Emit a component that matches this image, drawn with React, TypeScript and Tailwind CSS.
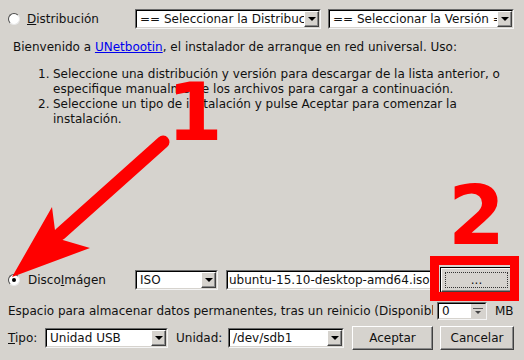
import React from "react";

function Arrow() {
  return (
    <div className="w-[15px] h-[16px] shrink-0 bg-[#d6d3ce] border border-t-white border-l-white border-b-[#404040] border-r-[#404040] shadow-[inset_-1px_-1px_0_#8a8a8a] flex items-center justify-center">
      <div className="w-0 h-0 border-l-[4px] border-r-[4px] border-t-[4px] border-l-transparent border-r-transparent border-t-black" />
    </div>
  );
}

function Sunken({ className, children }: { className: string; children: React.ReactNode }) {
  return (
    <div className={className}>
      <div className="flex-1 min-w-0 flex bg-white border border-t-black border-l-black border-b-[#d6d3ce] border-r-[#d6d3ce]">
        {children}
      </div>
    </div>
  );
}

function Combo({ className, text }: { className: string; text: string }) {
  return (
    <Sunken className={className}>
      <div className="flex-1 min-w-0 overflow-hidden whitespace-nowrap pl-[3px] leading-[16px]">{text}</div>
      <Arrow />
    </Sunken>
  );
}

function Radio({ on }: { on?: boolean }) {
  return (
    <div className="w-[12px] h-[12px] shrink-0 rounded-full bg-white border border-t-[#4a4a4a] border-l-[#4a4a4a] border-b-[#e8e8e8] border-r-[#e8e8e8] flex items-center justify-center">
      {on ? <div className="w-[4px] h-[4px] rounded-full bg-black" /> : null}
    </div>
  );
}

function Button({ className, children }: { className: string; children: React.ReactNode }) {
  return (
    <div className={className}>
      <div className="flex-1 flex items-center justify-center bg-[#d6d3ce] border border-t-white border-l-white border-b-[#404040] border-r-[#404040] shadow-[inset_-1px_-1px_0_#8a8a8a]">
        {children}
      </div>
    </div>
  );
}

export default function App() {
  return (
    <div className="relative w-[524px] h-[360px] overflow-hidden bg-[#d6d3ce] text-[12px] text-[#111] font-['DejaVu_Sans',sans-serif] flex flex-col">
      {/* Row 1 */}
      <div className="mt-[9px] h-[20px] flex items-center pl-[8px]">
        <div className="w-[127px] flex items-center">
          <Radio />
          <span className="ml-[7px]">
            <u>D</u>istribución
          </span>
        </div>
        <Combo className="flex w-[186px] h-[20px] shrink-0 border border-t-[#6b6b6b] border-l-[#6b6b6b] border-b-[#f4f4f4] border-r-[#f4f4f4]" text="== Seleccionar la Distribución ==" />
        <Combo className="ml-[7px] flex w-[186px] h-[20px] shrink-0 border border-t-[#6b6b6b] border-l-[#6b6b6b] border-b-[#f4f4f4] border-r-[#f4f4f4]" text="== Seleccionar la Versión ==" />
      </div>

      {/* Welcome */}
      <div className="mt-[11px] pl-[13px] leading-[15px] whitespace-nowrap">
        Bienvenido a <span className="text-[#0000ee] underline">UNetbootin</span>, el instalador de arranque en red universal. Uso:
      </div>

      <div className="mt-[12px] pl-[38px] leading-[15px] whitespace-nowrap">
        <div className="flex">
          <span className="w-[15px] shrink-0">1.</span>
          <span>
            Seleccione una distribución y versión para descargar de la lista anterior, o
            <br />
            especifique manualmente los archivos para cargar a continuación.
          </span>
        </div>
        <div className="flex">
          <span className="w-[15px] shrink-0">2.</span>
          <span>
            Seleccione un tipo de instalación y pulse Aceptar para comenzar la
            <br />
            instalación.
          </span>
        </div>
      </div>

      {/* Bottom block */}
      <div className="mt-auto mb-[10px]">
        <div className="h-[26px] flex items-center pl-[8px]">
          <div className="w-[127px] flex items-center">
            <Radio on />
            <span className="ml-[8px]">
              Disco<u>I</u>mágen
            </span>
          </div>
          <Combo className="flex w-[83px] h-[20px] shrink-0 border border-t-[#6b6b6b] border-l-[#6b6b6b] border-b-[#f4f4f4] border-r-[#f4f4f4]" text="ISO" />
          <Sunken className="ml-[8px] flex w-[206px] h-[20px] shrink-0 border border-t-[#6b6b6b] border-l-[#6b6b6b] border-b-[#f4f4f4] border-r-[#f4f4f4]">
            <div className="flex-1 min-w-0 overflow-hidden whitespace-nowrap pl-[1px] leading-[16px]">ubuntu-15.10-desktop-amd64.iso</div>
          </Sunken>
          <Button className="ml-[8px] flex w-[73px] h-[26px] shrink-0 border border-black">
            <div className="w-[63px] h-[16px] border border-dotted border-[#333] flex items-center justify-center leading-[12px]">...</div>
          </Button>
        </div>

        <div className="mt-[9px] h-[18px] flex items-center pl-[8px]">
          <div className="w-[425px] overflow-hidden whitespace-nowrap">
            Espacio para almacenar datos permanentes, tras un reinicio (Disponible: 0 MB)
          </div>
          <Sunken className="ml-[4px] flex w-[50px] h-[18px] shrink-0 border border-t-[#6b6b6b] border-l-[#6b6b6b] border-b-[#f4f4f4] border-r-[#f4f4f4]">
            <div className="flex-1 pl-[3px] leading-[14px]">0</div>
            <div className="w-[14px] shrink-0 flex flex-col items-center justify-center gap-[2px] bg-[#d6d3ce]">
              <div className="w-[10px] h-[1px] bg-[#555]" />
              <div className="w-0 h-0 border-l-[3px] border-r-[3px] border-t-[3px] border-l-transparent border-r-transparent border-t-[#444]" />
            </div>
          </Sunken>
          <span className="ml-[8px]">MB</span>
        </div>

        <div className="mt-[6px] h-[24px] flex items-center pl-[8px]">
          <span className="w-[37px] shrink-0">
            <u>T</u>ipo:
          </span>
          <Combo className="flex w-[123px] h-[20px] shrink-0 border border-t-[#6b6b6b] border-l-[#6b6b6b] border-b-[#f4f4f4] border-r-[#f4f4f4]" text="Unidad USB" />
          <span className="ml-[8px] w-[52px] shrink-0">Unidad:</span>
          <Combo className="flex w-[116px] h-[20px] shrink-0 border border-t-[#6b6b6b] border-l-[#6b6b6b] border-b-[#f4f4f4] border-r-[#f4f4f4]" text="/dev/sdb1" />
          <Button className="ml-[8px] flex w-[81px] h-[24px] shrink-0">Aceptar</Button>
          <Button className="ml-[7px] flex w-[74px] h-[24px] shrink-0">Cancelar</Button>
        </div>
      </div>

      {/* Annotations */}
      <svg className="absolute left-0 top-0 pointer-events-none" width="524" height="360" viewBox="0 0 524 360">
        <line x1="163" y1="142" x2="60" y2="234" stroke="#ff0000" strokeWidth="13" strokeLinecap="round" />
        <polygon points="12,277 52,207 56,238 90,248" fill="#ff0000" />
      </svg>
      <div className="absolute left-[167px] top-[73px] text-[80px] leading-none font-bold text-[#ff0000] font-['DejaVu_Sans',sans-serif]">1</div>
      <div className="absolute left-[448px] top-[175px] text-[82px] leading-none font-bold text-[#ff0000] font-['DejaVu_Sans',sans-serif]">2</div>
      <div className="absolute left-[430px] top-[256px] w-[89px] h-[45px] border-[9px] border-[#ff0000]" />
    </div>
  );
}
